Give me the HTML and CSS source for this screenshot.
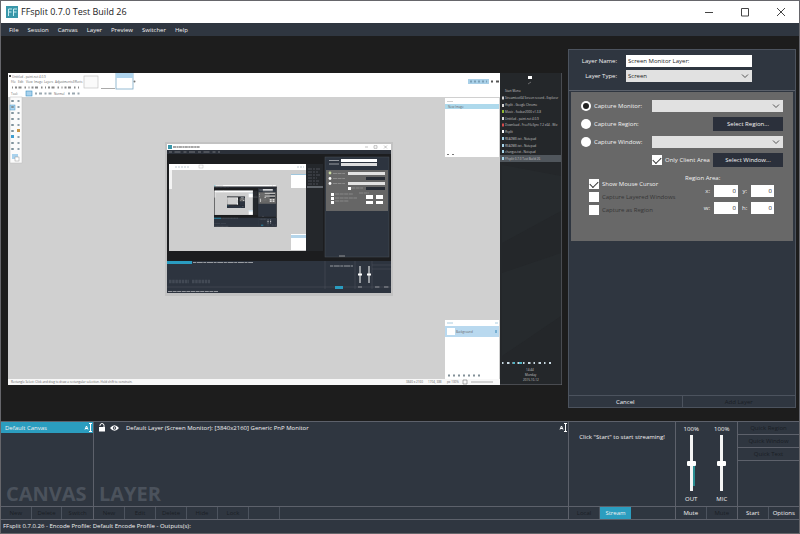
FILE: index.html
```html
<!DOCTYPE html>
<html lang="en">
  <head>
    <meta charset="UTF-8" />
    <meta name="viewport" content="width=device-width, initial-scale=1.0" />
    <title>FFsplit 0.7.0 Test Build 26</title>
    <link rel="stylesheet" href="styles.css">
  </head>
  <body>
    <div class="titlebar">
      <svg class="logo" viewBox="0 0 12 12">
        <rect width="12" height="12" fill="#3997aa" />
        <path d="M2.5 10V3H6M2.5 6H5.5M7.5 10V3H11M7.5 6H10.5" fill="none" stroke="#c9eef2" stroke-width="1" />
      </svg>
      <h1>FFsplit 0.7.0 Test Build 26</h1>
      <div class="window-buttons">
        <button aria-label="Minimize"><svg viewBox="0 0 10 10"><path d="M1 5.5H9" /></svg></button>
        <button aria-label="Maximize"><svg viewBox="0 0 10 10"><path d="M1.5 1.5H8.5V9H1.5Z" /></svg></button>
        <button aria-label="Close"><svg viewBox="0 0 10 10"><path d="M1 1L9 9M9 1L1 9" /></svg></button>
      </div>
    </div>
    <div class="menubar">
      <button>File</button>
      <button>Session</button>
      <button>Canvas</button>
      <button>Layer</button>
      <button>Preview</button>
      <button>Switcher</button>
      <button>Help</button>
    </div>

    <div class="workspace">
      <div class="preview">
        <svg viewBox="8 72 554 312">
          <defs>
            <!-- one copy of the program window, 224x149 -->
            <g id="app">
              <rect width="224" height="149" fill="#1c1d1f" />
              <rect width="224" height="6" fill="#fff" />
              <rect x="1" y="1" width="4" height="4" fill="#3997aa" />
              <path d="M6 3H33" stroke="#888" stroke-width="1.4" stroke-dasharray="3 .5 2 .4" />
              <path d="M198 3H201M207 1.7H210V4.3H207ZM217 1.5L220 4.5M220 1.5L217 4.5" fill="none" stroke="#888" stroke-width=".5" />
              <rect y="6" width="224" height="4" fill="#2c313a" />
              <path d="M2 8H53" stroke="#85888d" stroke-width=".8" stroke-dasharray="3 2.5 6 3" />
              <rect x="2" y="20" width="137" height="87" fill="#cecece" />
              <rect x="2" y="20" width="137" height="6" fill="#fff" />
              <rect x="2" y="26" width="3" height="19" fill="#f3f3f3" />
              <path d="M8 23H22M130 23H137" stroke="#bcc8d0" stroke-width="1" stroke-dasharray="2 1" />
              <rect x="32" y="21" width="4" height="3" fill="#fff" stroke="#aaa" stroke-width=".4" />
              <rect x="124" y="30" width="15" height="14" fill="#fff" />
              <rect x="124" y="30" width="15" height="1" fill="#9fc6dd" />
              <rect x="124" y="90" width="15" height="16" fill="#fff" />
              <rect x="124" y="91" width="15" height="3" fill="#b5d5ea" />
              <rect x="139" y="20" width="17" height="87" fill="#24272b" />
              <path d="M141 25H153M141 28H151M141 31H154M141 34H150M141 37H152M141 40H151" stroke="#5b6068" stroke-width=".7" stroke-dasharray="4 1 2 1" />
              <rect x="140" y="42" width="16" height="2" fill="#60656b" />
              <rect x="158" y="13" width="64" height="100" fill="#2d343f" stroke="#4a5059" stroke-width=".5" />
              <rect x="159" y="26" width="62" height="41" fill="#666" />
              <path d="M162 16.500H172M162 20H172" stroke="#a5a8ad" stroke-width=".9" />
              <rect x="174" y="15" width="36" height="3" fill="#fff" />
              <rect x="174" y="19" width="36" height="3" fill="#ddd" />
              <circle cx="163" cy="29" r="1.4" fill="#c7d8a0" />
              <circle cx="163" cy="34.500" r="1.400" fill="#fff" />
              <circle cx="163" cy="39.500" r="1.400" fill="#fff" />
              <path d="M166 29.500H178M166 34.500H178M166 39.500H178M184 44H196M168 50H186M168 54H190M168 57H182M192 49H202" stroke="#999" stroke-width=".7" stroke-dasharray="4 .6" />
              <rect x="181" y="28" width="37" height="3" fill="#e2e2e2" />
              <rect x="181" y="38" width="37" height="3" fill="#e2e2e2" />
              <rect x="199" y="33" width="19" height="3" fill="#272c35" />
              <rect x="199" y="43" width="19" height="3" fill="#272c35" />
              <path d="M181 43H184V46H181ZM164 49H167V52H164ZM164 53H167V56H164ZM164 57H167V60H164ZM199 51H206V55H199ZM209 51H216V55H209ZM199 57H206V60H199ZM209 57H216V60H209Z" fill="#fff" />
              <path d="M172 112H178" stroke="#aaa" stroke-width=".8" />
              <rect y="117" width="224" height="32" fill="#2d343f" />
              <rect y="117" width="25" height="3" fill="#2a9cc0" />
              <path d="M26 118.500H86M163 122H186" stroke="#a5a8ad" stroke-width=".9" stroke-dasharray="3 .7 6 .6" />
              <path d="M2 137.500H22M25 137.500H43" stroke="#434a55" stroke-width="3.500" stroke-dasharray="2.500 .7" />
              <path d="M0 143H224M158 117V145M188 117V145M205 117V145M205 121H224M205 125H224" stroke="#555b65" stroke-width=".4" />
              <path d="M193 122V139M202 122V139" stroke="#fff" stroke-width="1" />
              <path d="M191 130.500H195M200 130.500H204" stroke="#fff" stroke-width="2" />
              <path d="M191 143H195M208 143H213M217 143H222M1 147.500H51" stroke="#a0a3a8" stroke-width=".9" stroke-dasharray="4 .6" />
              <rect x="168" y="142" width="8" height="3" fill="#2a9cc0" />
            </g>
          </defs>
          <rect x="8" y="72" width="492" height="312" fill="#d0d0d0" />
          <rect x="8" y="72" width="492" height="24" fill="#fff" />
          <g class="tiny">
            <text x="12" y="76.500">Untitled - paint.net 4.0.9</text>
            <text x="11" y="82">File</text>
            <text x="18" y="82">Edit</text>
            <text x="26" y="82">View</text>
            <text x="34" y="82">Image</text>
            <text x="44" y="82">Layers</text>
            <text x="55" y="82">Adjustments</text>
            <text x="73" y="82">Effects</text>
            <text x="11" y="94">Tool:</text>
            <text x="54" y="94">Normal</text>
          </g>
          <path d="M12 86.500H80" stroke="#888" stroke-width="2" stroke-dasharray="1 2 2 1.500 3 3 1.500 2.500" />
          <path d="M35 92.500H52M68 92.500H80" stroke="#9aa7b0" stroke-width="2" stroke-dasharray="2 2 3 2.500" />
          <rect x="26" y="90" width="6" height="5" fill="#a9d2ed" stroke="#3c91c4" stroke-width=".6" />
          <rect x="9" y="74" width="2" height="2" fill="#444" />
          <rect x="84" y="75" width="14" height="12" fill="#fafafa" stroke="#bbb" stroke-width=".6" />
          <path d="M101 87.500H115" stroke="#aaa" />
          <rect x="116" y="72" width="17" height="16" fill="#fff" stroke="#7cabc7" stroke-width=".8" />
          <rect x="116" y="72" width="17" height="5" fill="#b0d5ee" />
          <circle cx="134.500" cy="80.500" r="1" fill="#777" />
          <rect x="468" y="78" width="21" height="5" fill="#a9d0e8" />
          <path d="M470 80.500H487" stroke="#7ba0b8" stroke-width="2" stroke-dasharray="2 2" />
          <path d="M491 80.500H493M496 80.500H499" stroke="#555" stroke-width="2" />
          <!-- tool palette -->
          <rect x="10" y="96" width="12" height="66" fill="#fbfbfb" stroke="#bbb" stroke-width=".5" />
          <rect x="10" y="104" width="5" height="5" fill="#acd4ef" stroke="#4e9bc9" stroke-width=".5" />
          <path d="M12.500 99V151" stroke="#7f929c" stroke-width="2.500" stroke-dasharray="2 4" />
          <path d="M18.500 99V151" stroke="#8e9ea8" stroke-width="2" stroke-dasharray="2 4" />
          <path d="M17 128H20V131H17Z" fill="#c89546" />
          <path d="M11 134H14V137H11Z" fill="#409ed0" />
          <rect x="12" y="153" width="6" height="5" fill="#a9d2ed" />
          <rect x="15" y="156" width="4" height="4" fill="#fff" stroke="#999" stroke-width=".5" />
          <!-- history and layers -->
          <rect x="445" y="97" width="54" height="59" fill="#fff" />
          <rect x="445" y="103" width="54" height="5" fill="#aed9ec" />
          <path d="M447 100.500H453" stroke="#bbb" stroke-width=".7" />
          <path d="M447 153.500H455" stroke="#777" stroke-dasharray="2 3" />
          <rect x="445" y="319" width="54" height="59" fill="#fff" />
          <rect x="445" y="325" width="54" height="11" fill="#b9d9ef" />
          <rect x="447" y="327" width="8" height="7" fill="#fff" />
          <path d="M447 322H453M495 322H498" stroke="#aaccdf" />
          <path d="M495 329H497V332H495Z" fill="#76afd2" />
          <path d="M448 374.500H480" stroke="#829098" stroke-width="2" stroke-dasharray="2 3" />
          <g class="tiny">
            <text x="448" y="106.500">New Image</text>
            <text x="456" y="332">Background</text>
          </g>
          <rect x="8" y="378" width="492" height="6" fill="#f8f8f8" />
          <g class="tiny">
            <text x="11" y="382">Rectangle Select: Click and drag to draw a rectangular selection. Hold shift to constrain.</text>
            <text x="406" y="382">3840 x 2160</text>
            <text x="428" y="382">1704, 388</text>
            <text x="447" y="382">px  100%</text>
          </g>
          <path d="M463 379H467V383H463ZM471 381H493" fill="none" stroke="#777" stroke-width=".6" />
          <!-- vertical taskbar -->
          <rect x="500" y="72" width="62" height="312" fill="#24272a" />
          <path d="M502 164L561 175V210L502 242ZM502 272L561 252V315L502 355Z" fill="#2b3135" opacity=".35" />
          <path d="M528 75H532V78H528Z" fill="#fff" />
          <path d="M528 83L531 81" stroke="#999" stroke-width=".6" />
          <rect x="500" y="154" width="61" height="7" fill="#50565c" />
          <path d="M561.500 72V384M500 383.500H562" stroke="#63656a" stroke-width=".6" />
          <path d="M502 95.500H504V98.500H502ZM502 103H504V106H502ZM502 116H504V119H502Z" fill="#d6d6d6" />
          <path d="M502 109H504V112H502Z" fill="#93b831" />
          <path d="M502 122.500H504V125.500H502Z" fill="#d54b4c" />
          <path d="M502 129H504V132H502Z" fill="#fff" />
          <path d="M502 136H504V139H502ZM502 143H504V146H502ZM502 149H504V152H502ZM502 156H504V159H502Z" fill="#a9d6ea" />
          <g class="tiny tasks">
            <text x="505" y="91">Start Menu</text>
            <text x="505" y="98">Streamtest04 Screen record - Explorer</text>
            <text x="505" y="105">ffsplit - Google Chrome</text>
            <text x="505" y="112">Music - foobar2000 v1.3.8</text>
            <text x="505" y="118.500">Untitled - paint.net 4.0.9</text>
            <text x="505" y="125">Download - FreeFileSync 7.2 x64 - Wiz</text>
            <text x="505" y="132">ffsplit</text>
            <text x="505" y="139">README.txt - Notepad</text>
            <text x="505" y="146">README.txt - Notepad</text>
            <text x="505" y="152">changes.txt - Notepad</text>
            <text x="505" y="159">FFsplit 0.7.0 Test Build 26</text>
            <text x="526" y="370">14:44</text>
            <text x="525" y="375">Monday</text>
            <text x="523" y="379.500">2015-10-12</text>
          </g>
          <path d="M502 362H551" stroke="#c9d9e2" stroke-width="2" stroke-dasharray="1.500 3.500 2.500 3" />
          <path d="M513 361H515V363H513ZM519 361H522V363H519Z" fill="#4eb3c5" />
          <!-- the window inside itself -->
          <rect x="165" y="141" width="228" height="154" fill="#c2c2c2" />
          <use href="#app" transform="translate(167 143)" />
          <use href="#app" transform="translate(214 184) scale(.28)" />
          <use href="#app" transform="translate(227 195) scale(.08)" />
        </svg>
      </div>

      <form class="panel">
        <div class="panel-head">
          <label for="layer-name">Layer Name:</label>
          <input id="layer-name" type="text" value="Screen Monitor Layer:" />
          <label for="layer-type">Layer Type:</label>
          <div class="select">
            <select id="layer-type"><option>Screen</option></select>
            <svg viewBox="0 0 8 8"><path d="M1 2.500L4 5.500L7 2.500" /></svg>
          </div>
        </div>
        <div class="panel-body">
          <div class="row">
            <label class="choice"><input type="radio" name="source" checked /> Capture Monitor:</label>
            <div class="select">
              <select aria-label="Monitor"><option></option></select>
              <svg viewBox="0 0 8 8"><path d="M1 2.500L4 5.500L7 2.500" /></svg>
            </div>
          </div>
          <div class="row">
            <label class="choice"><input type="radio" name="source" /> Capture Region:</label>
            <button type="button" class="pick">Select Region...</button>
          </div>
          <div class="row">
            <label class="choice"><input type="radio" name="source" /> Capture Window:</label>
            <div class="select">
              <select aria-label="Window"><option></option></select>
              <svg viewBox="0 0 8 8"><path d="M1 2.500L4 5.500L7 2.500" /></svg>
            </div>
          </div>
          <div class="row client-row">
            <label class="choice"><input type="checkbox" checked /> Only Client Area</label>
            <button type="button" class="pick">Select Window...</button>
          </div>
          <div class="options">
            <div class="checks">
              <label class="choice"><input type="checkbox" checked /> Show Mouse Cursor</label>
              <label class="choice off"><input type="checkbox" disabled /> Capture Layered Windows</label>
              <label class="choice off"><input type="checkbox" disabled /> Capture as Region</label>
            </div>
            <div class="region">
              <div class="region-title">Region Area:</div>
              <div class="region-grid">
                <label for="rx">x:</label><input id="rx" type="text" value="0" />
                <label for="ry">y:</label><input id="ry" type="text" value="0" />
                <label for="rw">w:</label><input id="rw" type="text" value="0" />
                <label for="rh">h:</label><input id="rh" type="text" value="0" />
              </div>
            </div>
          </div>
        </div>
        <div class="panel-foot">
          <button type="button">Cancel</button>
          <button type="button" disabled>Add Layer</button>
        </div>
      </form>
    </div>

    <div class="dock">
      <div class="pane canvas">
        <div class="item selected">
          <span>Default Canvas</span>
          <svg class="rename" viewBox="0 0 8 9"><path d="M1 6.500L2.500 3L4 6.500M1.500 5.500H3.500M5 .500H8M6.500 .500V8.500M5 8.500H8" /></svg>
        </div>
        <div class="watermark">CANVAS</div>
        <div class="buttons">
          <button disabled>New</button>
          <button disabled>Delete</button>
          <button disabled>Switch</button>
        </div>
      </div>
      <div class="pane layer">
        <div class="item">
          <svg class="lock" viewBox="0 0 8 9"><path d="M1 4H7V8.500H1Z" fill="#fff" /><path d="M2 3V2.500A2 2 0 0 1 6 2.500V4" fill="none" stroke="#fff" /></svg>
          <svg class="eye" viewBox="0 0 9 8"><path d="M0 4Q4.500 -1.500 9 4Q4.500 9.500 0 4Z" fill="#fff" /><circle cx="4.500" cy="4" r="1.700" fill="#2f3640" /><circle cx="4.500" cy="4" r=".8" fill="#fff" /></svg>
          <span>Default Layer (Screen Monitor): [3840x2160] Generic PnP Monitor</span>
          <svg class="rename" viewBox="0 0 8 9"><path d="M1 6.500L2.500 3L4 6.500M1.500 5.500H3.500M5 .500H8M6.500 .500V8.500M5 8.500H8" /></svg>
        </div>
        <div class="watermark">LAYER</div>
        <div class="buttons">
          <button disabled>New</button>
          <button disabled>Edit</button>
          <button disabled>Delete</button>
          <button disabled>Hide</button>
          <button disabled>Lock</button>
          <button disabled aria-label="More"></button>
        </div>
      </div>
      <div class="pane stream">
        <p>Click "Start" to start streaming!</p>
        <div class="buttons">
          <button disabled>Local</button>
          <button class="active">Stream</button>
        </div>
      </div>
      <div class="pane audio">
        <div class="mixer">
          <div class="channel">
            <span>100%</span>
            <div class="fader">
              <input id="out" type="range" value="49" />
              <div class="level"></div>
            </div>
            <label for="out">OUT</label>
          </div>
          <div class="channel">
            <span>100%</span>
            <div class="fader"><input id="mic" type="range" value="49" /></div>
            <label for="mic">MIC</label>
          </div>
        </div>
        <div class="buttons">
          <button>Mute</button>
          <button disabled>Mute</button>
        </div>
      </div>
      <div class="pane quick">
        <div class="quick-list">
          <button disabled>Quick Region</button>
          <button disabled>Quick Window</button>
          <button disabled>Quick Text</button>
        </div>
        <div class="buttons">
          <button>Start</button>
          <button>Options</button>
        </div>
      </div>
    </div>
    <div class="status">FFsplit 0.7.0.26 - Encode Profile: Default Encode Profile - Outputs(s):</div>
  </body>
</html>
```

FILE: styles.css
```css
* {
  box-sizing: border-box;
}
body {
  display: flex;
  flex-direction: column;
  min-height: 100vh;
  margin: 0;
  border: 1px solid #66666b;
  background: #2f3640;
  color: #f2f2f2;
  font-family: "Open Sans", "Noto Sans", sans-serif;
  font-size: 6px;
  line-height: 8px;
}
button,
input,
select {
  margin: 0;
  padding: 0;
  border: 0;
  border-radius: 0;
  background: none;
  color: inherit;
  font: inherit;
}

.titlebar {
  display: flex;
  align-items: center;
  height: 22px;
  padding-left: 5px;
  background: #fff;
  color: #222;
}
.logo {
  width: 12px;
  height: 12px;
}
h1 {
  margin: 0 0 0 3px;
  font-size: 9px;
  font-weight: normal;
  line-height: 12px;
}
.window-buttons {
  display: flex;
  margin-left: auto;
}
.window-buttons button {
  display: flex;
  align-items: center;
  justify-content: center;
  width: 36px;
  height: 22px;
}
.window-buttons svg {
  width: 10px;
  height: 10px;
  fill: none;
  stroke: #444;
}
.menubar {
  display: flex;
  gap: 9px;
  height: 13px;
  padding-left: 8px;
}

.workspace {
  display: flex;
  flex: 1;
  gap: 6px;
  padding: 13px 3px 13px 7px;
  background: #1d1d1d;
}
.preview {
  display: flex;
  flex: 1;
  align-items: center;
}
.preview svg {
  display: block;
  width: 100%;
}
.tiny {
  fill: #666;
  font-size: 3px;
}
.tasks {
  fill: #c5c5c5;
}

.panel {
  display: flex;
  flex: 0 0 228px;
  flex-direction: column;
  border: 1px solid #4c535e;
  background: #2f3640;
}
.panel-head {
  display: grid;
  grid-template-columns: 48px 126px;
  gap: 3px 9px;
  align-items: center;
  padding: 5px 0 8px;
  border-bottom: 1px solid #5a606a;
}
.panel-head label {
  text-align: right;
}
.panel-head input {
  height: 12px;
  padding-left: 2px;
  background: #fff;
  color: #222;
}
.select {
  position: relative;
  height: 12px;
}
.select select {
  display: block;
  width: 100%;
  height: 12px;
  padding-left: 2px;
  appearance: none;
  background: #e1e1e1;
  color: #222;
}
.select svg {
  position: absolute;
  top: 2px;
  right: 3px;
  width: 8px;
  height: 8px;
  fill: none;
  stroke: #555;
  pointer-events: none;
}
.panel-body {
  display: flex;
  flex-direction: column;
  gap: 5px;
  height: 149px;
  margin: 1px 2px 0;
  padding: 8px 10px 0;
  background: #686868;
}
.row {
  display: flex;
  align-items: center;
  justify-content: space-between;
}
.row .select {
  width: 131px;
}
.choice {
  display: flex;
  align-items: center;
  gap: 3px;
}
.choice input {
  display: grid;
  place-items: center;
  width: 10px;
  height: 10px;
  appearance: none;
  background: #fff;
}
.choice input[type="radio"] {
  border-radius: 50%;
}
.choice input[type="radio"]:checked::after {
  content: "";
  width: 6px;
  height: 6px;
  border-radius: 50%;
  background: #222;
}
.choice input[type="checkbox"]:checked::after {
  content: "";
  width: 7px;
  height: 4px;
  margin-bottom: 2px;
  border: solid #333;
  border-width: 0 0 1px 1px;
  transform: rotate(-45deg);
}
.choice.off {
  color: #363636;
}
.pick {
  width: 70px;
  height: 14px;
  background: #2b303b;
}
.client-row {
  margin-left: 71px;
}
.options {
  display: flex;
  justify-content: space-between;
  padding: 2px 9px 0 8px;
}
.checks {
  display: flex;
  flex-direction: column;
  gap: 3px;
  padding-top: 5px;
}
.region-grid {
  display: grid;
  grid-template-columns: 25px 24px 5px 23px;
  gap: 5px 4px;
  align-items: center;
  padding-top: 3px;
  text-align: right;
}
.region-grid input {
  width: 100%;
  height: 12px;
  padding-right: 2px;
  background: #fff;
  color: #222;
  text-align: right;
}
.panel-foot {
  display: flex;
  margin-top: auto;
  border-top: 1px solid #4c535e;
}
.panel-foot button {
  flex: 1;
  height: 11px;
}
.panel-foot button + button {
  border-left: 1px solid #4c535e;
}
button:disabled {
  color: #1a1e25;
}

.dock {
  display: flex;
  height: 99px;
  border-top: 1px solid #5d616b;
}
.pane {
  display: flex;
  flex-direction: column;
  border-right: 1px solid #5d616b;
}
.canvas {
  width: 93px;
}
.layer {
  flex: 1;
}
.stream {
  width: 107px;
}
.audio {
  width: 62px;
}
.quick {
  width: 61px;
  border-right: 0;
}
.item {
  display: flex;
  align-items: center;
  height: 11px;
  padding: 0 1px 0 4px;
}
.selected {
  background: #2b9dbf;
}
.rename {
  width: 8px;
  height: 9px;
  margin-left: auto;
  fill: none;
  stroke: #fff;
}
.lock {
  width: 8px;
  height: 9px;
}
.eye {
  width: 9px;
  height: 8px;
  margin: 0 7px 0 4px;
}
.watermark {
  margin-top: auto;
  padding-left: 5px;
  color: #4b525c;
  font-size: 20px;
  font-weight: 700;
  line-height: 25px;
}
.buttons {
  display: flex;
  height: 14px;
  margin-top: auto;
  border-top: 1px solid #5d616b;
  border-bottom: 1px solid #5d616b;
}
.watermark + .buttons {
  margin-top: 0;
}
.buttons button {
  width: 31px;
  border-right: 1px solid #4c535e;
}
.buttons button:last-child {
  border-right: 0;
}
.layer .buttons button:last-child {
  border-right: 1px solid #4c535e;
}
.buttons .active {
  background: #2b9dbf;
}
.stream p {
  margin: 11px 0 0;
  text-align: center;
}
.mixer {
  display: flex;
}
.channel {
  display: flex;
  flex: 1;
  flex-direction: column;
  align-items: center;
  padding-top: 3px;
}
.fader {
  position: relative;
  height: 56px;
  margin: 2px 0 4px;
}
.fader input {
  display: block;
  width: 9px;
  height: 56px;
  appearance: none;
  background: linear-gradient(#f4f4f4, #f4f4f4) center / 3px 100% no-repeat;
  direction: rtl;
  writing-mode: vertical-lr;
}
.fader input::-webkit-slider-thumb {
  width: 9px;
  height: 5px;
  appearance: none;
  border-radius: 1px;
  background: #fff;
}
.level {
  position: absolute;
  top: 31px;
  left: 6px;
  width: 2px;
  height: 20px;
  background: #2a8d92;
}
.quick-list {
  display: flex;
  flex-direction: column;
}
.quick-list button {
  height: 13px;
  border-bottom: 1px solid #5d616b;
}
.status {
  height: 13px;
  padding: 2px 2px 0;
}
```
